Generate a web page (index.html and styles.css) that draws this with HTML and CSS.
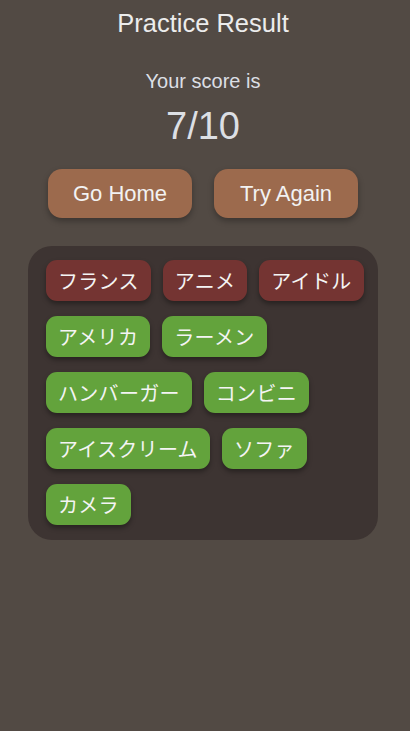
FILE: index.html
```html
<!DOCTYPE html>
<html lang="ja">
<head>
<meta charset="utf-8">
<link rel="stylesheet" href="styles.css">
</head>
<body>
<main class="page">
  <h1 class="title">Practice Result</h1>
  <p class="label">Your score is</p>
  <p class="score">7/10</p>
  <div class="actions">
    <button class="btn">Go Home</button>
    <button class="btn">Try Again</button>
  </div>
  <section class="panel">
    <span class="chip wrong">フランス</span>
    <span class="chip wrong">アニメ</span>
    <span class="chip wrong">アイドル</span>
    <span class="chip right">アメリカ</span>
    <span class="chip right">ラーメン</span>
    <span class="chip right">ハンバーガー</span>
    <span class="chip right">コンビニ</span>
    <span class="chip right">アイスクリーム</span>
    <span class="chip right">ソファ</span>
    <span class="chip right">カメラ</span>
  </section>
</main>
</body>
</html>
```
FILE: styles.css
```css
html, body {
  margin: 0;
  padding: 0;
  background: #524a44;
  height: 100%;
}
.page {
  font-family: "Liberation Sans", Arial, "Noto Sans CJK JP", sans-serif;
  color: #ececec;
  display: flex;
  flex-direction: column;
  align-items: center;
  padding: 8px 4px 0 0;
}
.title {
  margin: 0;
  font-size: 25.5px;
  font-weight: normal;
  line-height: 30px;
}
.label {
  margin: 31px 0 0;
  font-size: 20px;
  line-height: 24px;
  color: #dcdfe4;
}
.score {
  margin: 11px 0 0;
  font-size: 38px;
  line-height: 44px;
  color: #dcdfe4;
}
.actions {
  display: flex;
  gap: 22px;
  margin-top: 21px;
}
.btn {
  width: 144px;
  height: 49px;
  border: none;
  border-radius: 14px;
  background: #9c6a4d;
  color: #f2f2f2;
  font-family: "Liberation Sans", Arial, sans-serif;
  font-size: 22px;
  box-shadow: 0 3px 6px rgba(0,0,0,0.3);
  padding: 0;
}
.panel {
  box-sizing: border-box;
  width: 350px;
  margin-top: 28px;
  background: #3d3432;
  border-radius: 24px;
  padding: 14px 12px 15px 18px;
  display: flex;
  flex-wrap: wrap;
  column-gap: 12px;
  row-gap: 15px;
}
.chip {
  font-family: "Noto Sans CJK JP", sans-serif;
  font-size: 20px;
  letter-spacing: 0.3px;
  line-height: 25px;
  padding: 8px 12px;
  border-radius: 11px;
  color: #f4f4f4;
  box-shadow: 0 3px 5px rgba(0,0,0,0.35);
}
.wrong { background: #743432; }
.right { background: #63a33c; }
```
